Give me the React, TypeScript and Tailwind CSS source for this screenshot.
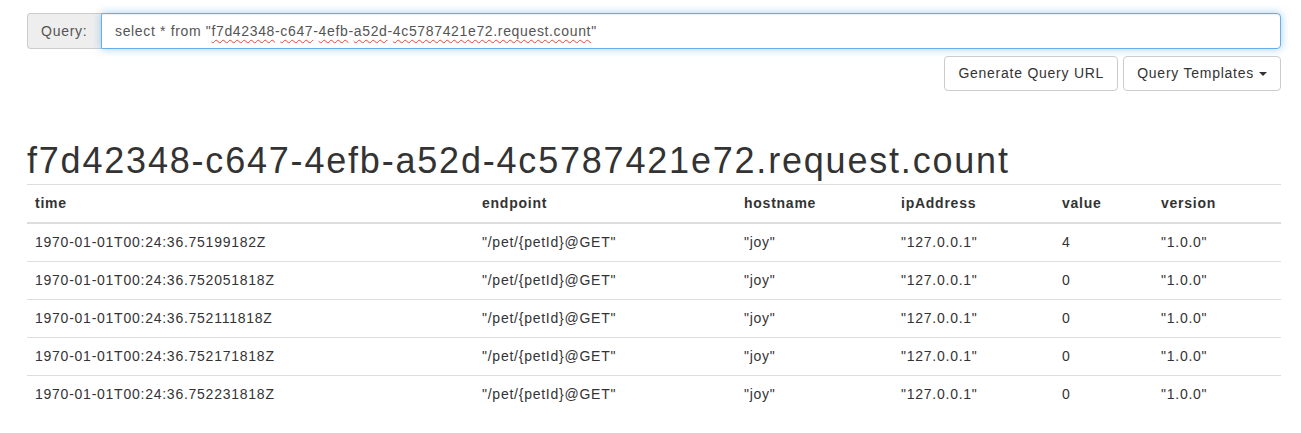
import React from 'react';

const columns = [
  { key: 'time', width: 'w-[447px]' },
  { key: 'endpoint', width: 'w-[262px]' },
  { key: 'hostname', width: 'w-[157px]' },
  { key: 'ipAddress', width: 'w-[161px]' },
  { key: 'value', width: 'w-[99px]' },
  { key: 'version', width: '' },
];

const rows = [
  ['1970-01-01T00:24:36.75199182Z', '"/pet/{petId}@GET"', '"joy"', '"127.0.0.1"', '4', '"1.0.0"'],
  ['1970-01-01T00:24:36.752051818Z', '"/pet/{petId}@GET"', '"joy"', '"127.0.0.1"', '0', '"1.0.0"'],
  ['1970-01-01T00:24:36.752111818Z', '"/pet/{petId}@GET"', '"joy"', '"127.0.0.1"', '0', '"1.0.0"'],
  ['1970-01-01T00:24:36.752171818Z', '"/pet/{petId}@GET"', '"joy"', '"127.0.0.1"', '0', '"1.0.0"'],
  ['1970-01-01T00:24:36.752231818Z', '"/pet/{petId}@GET"', '"joy"', '"127.0.0.1"', '0', '"1.0.0"'],
];

const squiggle = 'underline decoration-wavy decoration-[#e5453a] decoration-1 underline-offset-[3px]';

export default function App() {
  return (
    <div className="min-h-[433px] bg-white pl-[27px] pr-[20px] pt-[13px] text-[14px] tracking-[0.75px] text-[#333] font-['Liberation_Sans',Arial,sans-serif]">
      {/* Query input */}
      <div className="flex h-[36px]">
        <div className="flex w-[74px] items-center rounded-l-[4px] border border-r-0 border-[#ccc] bg-[#eee] pl-[13px] text-[#555]">
          Query:
        </div>
        <div className="flex flex-1 items-center rounded-r-[4px] border border-[#66afe9] bg-white pl-[13px] tracking-[0.65px] text-[#555] shadow-[inset_0_1px_1px_rgba(0,0,0,0.075),0_0_8px_rgba(102,175,233,0.6)]">
          <span className="whitespace-pre">
            {'select * from "'}
            <span className={squiggle}>f7d42348</span>-<span className={squiggle}>c647</span>-
            <span className={squiggle}>4efb</span>-<span className={squiggle}>a52d</span>-
            <span className={squiggle}>4c5787421e72.request.count</span>"
          </span>
        </div>
      </div>

      {/* Actions */}
      <div className="mt-[7px] flex justify-end gap-[5px]">
        <button className="h-[35px] rounded-[4px] border border-[#ccc] bg-white px-[13px] text-[#333]">
          Generate Query URL
        </button>
        <button className="flex h-[35px] items-center rounded-[4px] border border-[#ccc] bg-white px-[13px] text-[#333]">
          Query Templates
          <span className="ml-[5px] h-0 w-0 border-x-[4px] border-t-[4px] border-x-transparent border-t-[#333]" />
        </button>
      </div>

      <h1 className="mt-[50px] mb-[3px] h-[40px] text-[36px] font-normal leading-[40px] tracking-[1.8px] text-[#333]">
        f7d42348-c647-4efb-a52d-4c5787421e72.request.count
      </h1>

      <table className="w-full table-fixed border-collapse">
        <thead>
          <tr>
            {columns.map((c) => (
              <th
                key={c.key}
                className={`${c.width} border-t border-b-2 border-[#ddd] px-2 py-2 text-left font-bold leading-[21px]`}
              >
                {c.key}
              </th>
            ))}
          </tr>
        </thead>
        <tbody>
          {rows.map((r, i) => (
            <tr key={i}>
              {r.map((cell, j) => (
                <td key={j} className="border-t border-[#ddd] px-2 py-2 leading-[21px]">
                  {cell}
                </td>
              ))}
            </tr>
          ))}
        </tbody>
      </table>
    </div>
  );
}
